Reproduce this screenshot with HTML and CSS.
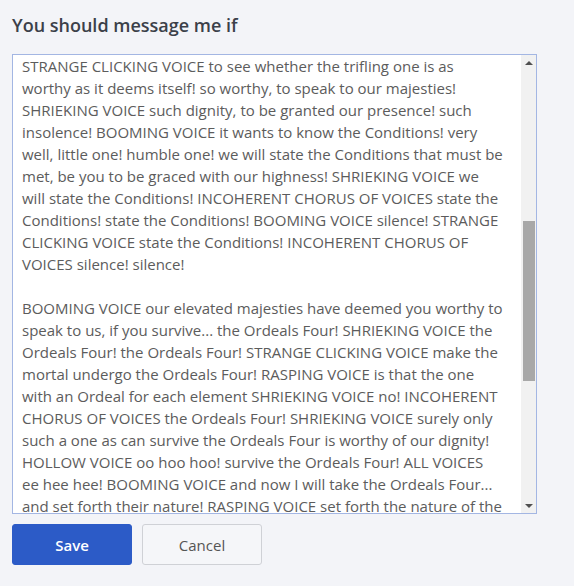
FILE: index.html
```html
<!DOCTYPE html>
<html lang="en">
<head>
<meta charset="utf-8">
<title>You should message me if</title>
<link rel="stylesheet" href="styles.css">
</head>
<body>
<div class="panel">
  <h2 class="title">You should message me if</h2>
  <div class="editor">
    <div class="editor-text">
      <p>STRANGE CLICKING VOICE to see whether the trifling one is as<br>
      worthy as it deems itself! so worthy, to speak to our majesties!<br>
      SHRIEKING VOICE such dignity, to be granted our presence! such<br>
      insolence! BOOMING VOICE it wants to know the Conditions! very<br>
      well, little one! humble one! we will state the Conditions that must be<br>
      met, be you to be graced with our highness! SHRIEKING VOICE we<br>
      will state the Conditions! INCOHERENT CHORUS OF VOICES state the<br>
      Conditions! state the Conditions! BOOMING VOICE silence! STRANGE<br>
      CLICKING VOICE state the Conditions! INCOHERENT CHORUS OF<br>
      VOICES silence! silence!</p>
      <p>BOOMING VOICE our elevated majesties have deemed you worthy to<br>
      speak to us, if you survive... the Ordeals Four! SHRIEKING VOICE the<br>
      Ordeals Four! the Ordeals Four! STRANGE CLICKING VOICE make the<br>
      mortal undergo the Ordeals Four! RASPING VOICE is that the one<br>
      with an Ordeal for each element SHRIEKING VOICE no! INCOHERENT<br>
      CHORUS OF VOICES the Ordeals Four! SHRIEKING VOICE surely only<br>
      such a one as can survive the Ordeals Four is worthy of our dignity!<br>
      HOLLOW VOICE oo hoo hoo! survive the Ordeals Four! ALL VOICES<br>
      ee hee hee! BOOMING VOICE and now I will take the Ordeals Four...<br>
      and set forth their nature! RASPING VOICE set forth the nature of the</p>
    </div>
    <div class="scrollbar">
      <div class="arrow arrow-up"></div>
      <div class="track">
        <div class="thumb"></div>
      </div>
      <div class="arrow arrow-down"></div>
    </div>
  </div>
  <div class="actions">
    <button class="btn btn-primary">Save</button>
    <button class="btn btn-secondary">Cancel</button>
  </div>
</div>
</body>
</html>
```

FILE: styles.css
```css
html, body {
  margin: 0;
  padding: 0;
  background: #f3f4f8;
}

body {
  font-family: "Open Sans", "Liberation Sans", sans-serif;
  color: #555;
}

.panel {
  padding: 13px 12px 0 12px;
  width: 525px;
}

.title {
  margin: 0 0 17px 0;
  font-size: 18px;
  line-height: 24px;
  font-weight: 600;
  color: #3b4049;
}

.editor {
  display: flex;
  height: 458px;
  border: 1px solid #a3b6e3;
  background: #fff;
  overflow: hidden;
}

.editor-text {
  flex: 1;
  padding: 0 16px 0 9px;
  font-size: 15px;
  line-height: 22px;
  color: #5c5c5c;
  white-space: nowrap;
  overflow: hidden;
}

.editor-text p {
  margin: 0 0 22px 0;
}

.scrollbar {
  width: 15px;
  display: flex;
  flex-direction: column;
  background: #f1f1f1;
}

.arrow {
  height: 15px;
  display: flex;
  align-items: center;
  justify-content: center;
}

.arrow-up::before,
.arrow-down::before {
  content: "";
  width: 0;
  height: 0;
  border-left: 4px solid transparent;
  border-right: 4px solid transparent;
}

.arrow-up::before {
  border-bottom: 4px solid #505050;
}

.arrow-down::before {
  border-top: 4px solid #505050;
}

.track {
  flex: 1;
  padding-top: 151px;
}

.thumb {
  height: 160px;
  margin: 0 1px 0 2px;
  background: #a8a8a8;
}

.actions {
  display: flex;
  gap: 10px;
  margin-top: 10px;
}

.btn {
  width: 120px;
  height: 41px;
  border-radius: 3px;
  font-family: "Open Sans", "Liberation Sans", sans-serif;
  font-size: 15px;
  cursor: pointer;
}

.btn-primary {
  background: #2c5bc7;
  border: 1px solid #2c5bc7;
  color: #fff;
  font-weight: 600;
}

.btn-secondary {
  background: #f5f6f9;
  border: 1px solid #cfd1d6;
  color: #555;
}
```
